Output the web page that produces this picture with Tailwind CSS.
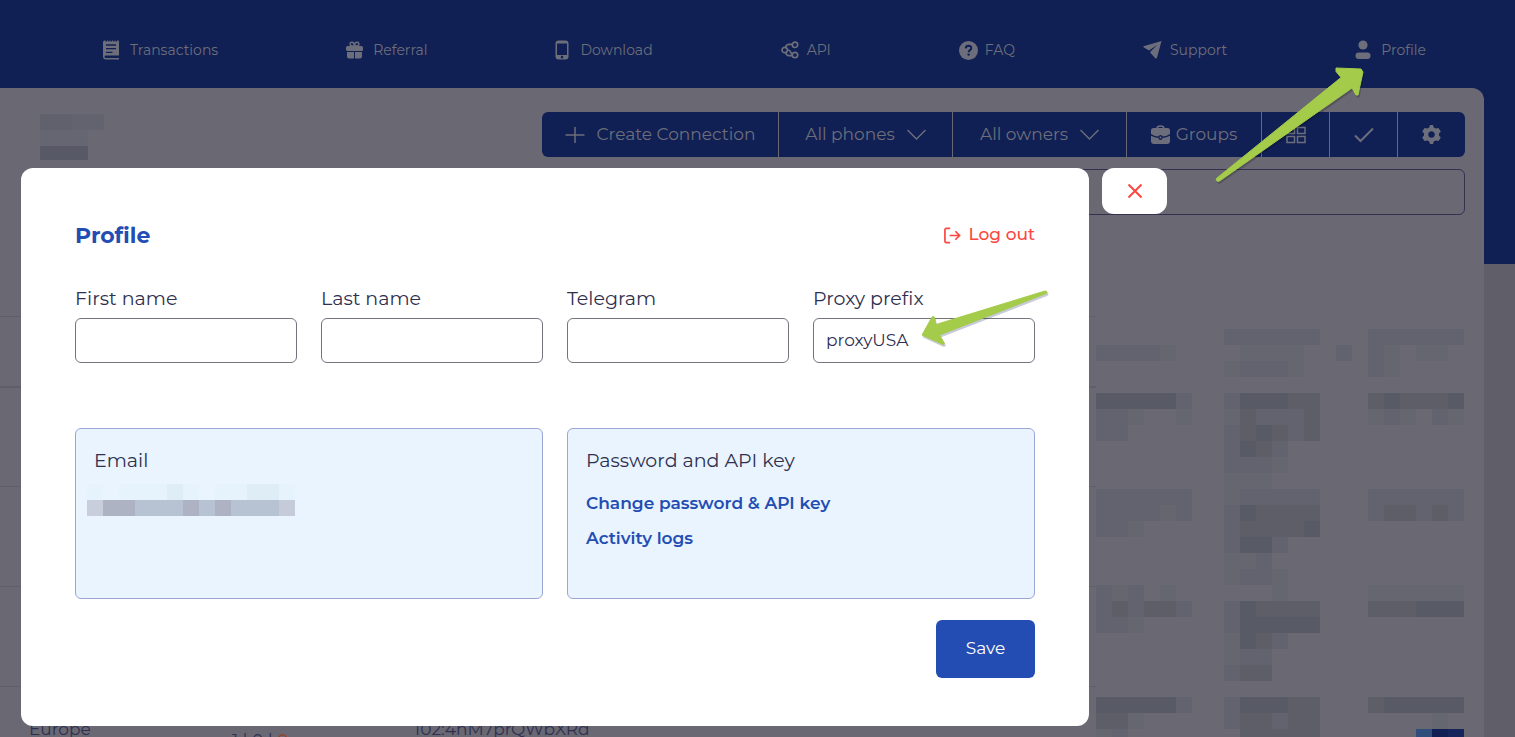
<!DOCTYPE html>
<html lang="en">
<head>
<meta charset="utf-8">
<meta name="viewport" content="width=device-width, initial-scale=1">
<title>Profile</title>
<script src="https://cdn.jsdelivr.net/npm/@tailwindcss/browser@4"></script>
</head>
<body class="bg-[#5f5e69] font-[Montserrat,Inter,sans-serif] text-[#2f3050]">
<div class="relative h-screen overflow-hidden">

  <!-- Dimmed page behind the dialog -->
  <header class="h-66 bg-[#102054] text-[#6d6e7b]">
    <nav class="flex h-22 items-center justify-between pt-3 pr-[89px] pl-[103px] text-sm">
      <a href="#" class="flex items-center gap-[11px]">
        <svg class="h-5 w-4" viewBox="0 0 16 20" fill="currentColor"><path d="M1.500.500h1V1.500h1.500V.500h1V1.500h1.500V.500h1V1.500H9V.500h1V1.500h1.500V.500h1V1.500H14V.500h1q1 0 1 1V15.500H3q-1.500 0-1.500 1.200T3 18h13v1.500H3Q0 19.500 0 16.500V2Q0 .500 1.500.500z"/><path d="M3 5h10M3 8.700h10M3 12.400h6.500" stroke="#102054" stroke-width="1.300"/></svg>
        Transactions</a>
      <a href="#" class="flex items-center gap-[10px]">
        <svg class="h-[18px] w-[17px]" viewBox="0 0 17 18" fill="currentColor"><rect y="5" width="17" height="5" rx="1.500"/><path d="M1 11h7v6.500H3q-2 0-2-2zM9 11h7v4.500q0 2-2 2H9z"/><path d="M8.500 5Q4 5.300 4 3q.2-1.800 2-1.700Q8.300 1.500 8.500 5q.2-3.500 2.500-3.700 1.800-.1 2 1.700 0 2.300-4.500 2z" fill="none" stroke="currentColor" stroke-width="1.500"/></svg>
        Referral</a>
      <a href="#" class="flex items-center gap-[11px]">
        <svg class="h-5 w-[14px]" viewBox="0 0 14 20" fill="currentColor"><path fill-rule="evenodd" d="M3.500.500h7Q13.500.500 13.500 3.500v13q0 3-3 3h-7q-3 0-3-3v-13Q.500.500 3.500.500zM2 3.500v11.500h10V3.500zM7 15.800a1.300 1.300 0 1 0 .01 0z"/></svg>
        Download</a>
      <a href="#" class="flex items-center gap-2">
        <svg class="h-[18px] w-[18px]" viewBox="0 0 18 18" fill="none" stroke="currentColor" stroke-width="1.700"><circle cx="3.700" cy="9" r="2.700"/><circle cx="14" cy="3.800" r="2.700"/><circle cx="14" cy="14" r="2.700"/><path d="M4.500 6.400Q5.300 3.300 8 3.300h3.300M4.500 11.600Q5.500 14.700 8 14.700h3.300M6.500 9Q9 9 9.500 11t2.300 2"/></svg>
        API</a>
      <a href="#" class="flex items-center gap-[7px]">
        <svg class="h-[19px] w-[19px]" viewBox="0 0 19 19"><circle cx="9.500" cy="9.500" r="9.500" fill="currentColor"/><path d="M6.700 7.300q.2-2.500 2.900-2.500 2.700.1 2.700 2.300 0 1.200-1.500 2.200-1.100.8-1.100 2" fill="none" stroke="#102054" stroke-width="2"/><circle cx="9.600" cy="13.600" r="1.200" fill="#102054"/></svg>
        FAQ</a>
      <a href="#" class="flex items-center gap-2">
        <svg class="h-5 w-[19px]" viewBox="0 0 19 20" fill="currentColor"><path d="M18.500 1 .500 6.300q-.5.500 0 1L6 10.500l8-5.500-6.800 7 .3 1 5 5.500q1 .3 1.500-.700z"/></svg>
        Support</a>
      <a href="#" class="flex items-center gap-[10px]">
        <svg class="h-5 w-4" viewBox="0 0 16 20" fill="currentColor"><circle cx="8" cy="5" r="4.600"/><rect x=".5" y="12.500" width="15" height="6.500" rx="3.250"/></svg>
        Profile</a>
    </nav>
  </header>

  <main class="-mt-44 mr-[31px] h-screen rounded-tr-xl bg-[#696873] pt-6 pr-[19px]">
    <div class="flex justify-end">
      <div class="flex h-[45px] divide-x divide-[#696873] overflow-hidden rounded-md bg-[#102054] text-[17px] text-[#6d6e7b]">
        <button class="flex w-[237px] items-center justify-center gap-3"><svg class="h-5 w-5" viewBox="0 0 20 20" stroke="currentColor" stroke-width="1.500"><path d="M.5 10h19M10 2v16"/></svg>Create Connection</button>
        <button class="flex w-[174px] items-center justify-center gap-3">All phones<svg class="h-3 w-[19px]" viewBox="0 0 19 12" fill="none" stroke="currentColor" stroke-width="1.400"><path d="m.5 1 9 9 9-9"/></svg></button>
        <button class="flex w-[174px] items-center justify-center gap-3">All owners<svg class="h-3 w-[19px]" viewBox="0 0 19 12" fill="none" stroke="currentColor" stroke-width="1.400"><path d="m.5 1 9 9 9-9"/></svg></button>
        <button class="flex w-[135px] items-center justify-center gap-[6px]"><svg class="h-[19px] w-[19px]" viewBox="0 0 19 19" fill="currentColor"><path d="M6 3.500Q6 1 9.500 1T13 3.500" fill="none" stroke="currentColor" stroke-width="1.500"/><path d="M2.500 3h14Q19 3 19 5.500V9q-4 2.500-7.500 2.500Q11.500 10 9.500 10t-2 1.500Q4 11.500 0 9V5.500Q0 3 2.500 3zM0 10.700q3.500 2 7.500 2.300 0 2 2 2t2-2q4-.3 7.500-2.300V16q0 3-3 3H3q-3 0-3-3z"/><circle cx="9.500" cy="12.500" r="1"/></svg>Groups</button>
        <button aria-label="Grid view" class="flex w-[68px] items-center justify-center"><svg class="h-[18px] w-5" viewBox="0 0 20 18" fill="none" stroke="currentColor" stroke-width="1.500"><path d="M1 1.500h7.500v6H1zM11.500 1.500H19v6h-7.500zM1 10.500h7.500v6H1zM11.500 10.500H19v6h-7.500z"/></svg></button>
        <button aria-label="Select" class="flex w-[68px] items-center justify-center"><svg class="h-4 w-5" viewBox="0 0 20 16" fill="none" stroke="currentColor" stroke-width="2"><path d="m1 8.500 5.500 5.500L19 1.500"/></svg></button>
        <button aria-label="Settings" class="flex w-[67px] items-center justify-center"><svg class="h-[19px] w-[19px]" viewBox="0 0 19 19" fill="currentColor"><path fill-rule="evenodd" d="M8 0h3l.8 2.600 1.700 1L16.500 3l2.300 3.500-1.800 2v2l1.800 2-2.300 3.500-3-.6-1.700 1L11 19H8l-.8-2.600-1.700-1-3 .6L.2 12.500l1.800-2v-2l-1.800-2L2.500 3l3 .6 1.700-1zM9.500 6.200a3.300 3.300 0 1 0 .01 0z"/></svg></button>
      </div>
    </div>
    <div class="mt-3 pl-10">
      <input type="text" aria-label="Search" class="block h-[46px] w-full rounded-md border border-[#343150] bg-transparent px-3">
    </div>
    <table class="mt-[101px] w-full table-fixed border-collapse text-[17px]">
      <colgroup><col class="w-[232px]"><col class="w-[182px]"><col></colgroup>
      <tr class="h-[70px] border-t border-[#5f5e69]"><td></td><td></td><td></td></tr>
      <tr class="h-[100px] border-t-2 border-[#5f5e69]"><td></td><td></td><td></td></tr>
      <tr class="h-[100px] border-t border-[#5f5e69]"><td></td><td></td><td></td></tr>
      <tr class="h-[100px] border-t border-[#5f5e69]"><td></td><td></td><td></td></tr>
      <tr class="h-[100px] border-t border-[#5f5e69] align-top"><td class="pt-[30px] pl-[29px]">Europe</td><td class="pt-[41px]">1 | 0 | <span class="text-[#9a4020]">0</span></td><td class="pt-[30px]">102:4hM7prQWbXRd</td></tr>
    </table>
  </main>

  <!-- Pixelated private data; filled by the script below -->
  <svg aria-hidden="true" class="absolute top-[114px] left-10" width="64" height="46"><path fill="#62636f" d="M0 0h64v16H0z"/><path fill="#60616c" d="M0 0h32v16H0z"/><path fill="#656671" d="M0 16h48v16H0z"/><path fill="#575966" d="M0 32h48v14H0z"/></svg>
  <svg id="mosaic" aria-hidden="true" class="absolute top-[313px] right-[49px]" width="370" height="424"><path fill="#696873" d="M0 0h370v424H0z"/></svg>

  <!-- Dialog -->
  <div class="absolute inset-x-0 top-42 flex items-start gap-[13px] pr-[348px] pl-[21px]">
    <section role="dialog" aria-labelledby="dialog-title" class="min-w-0 flex-1 rounded-xl bg-white px-[54px] pt-[51px] pb-12">
      <div class="flex h-8 items-center justify-between">
        <h1 id="dialog-title" class="text-[22px] font-bold text-[#234db3]">Profile</h1>
        <a href="#" class="flex items-center gap-2 text-[17px] font-medium text-[#fb4740]"><svg class="h-[17px] w-[17px]" viewBox="0 0 18 17" fill="none" stroke="currentColor" stroke-width="1.800"><path d="M6.500 1H2.500Q1 1 1 2.500v12Q1 16 2.500 16h4M6 8.500h10.500M12 4l4.500 4.500L12 13"/></svg>Log out</a>
      </div>
      <form>
        <div class="mt-[34px] grid grid-cols-4 gap-6 text-[19px] leading-7">
          <label class="flex flex-col gap-[5px]">First name<input type="text" class="h-[45px] w-full rounded-md border border-[#74747f] px-3 text-[17px]"></label>
          <label class="flex flex-col gap-[5px]">Last name<input type="text" class="h-[45px] w-full rounded-md border border-[#74747f] px-3 text-[17px]"></label>
          <label class="flex flex-col gap-[5px]">Telegram<input type="text" class="h-[45px] w-full rounded-md border border-[#74747f] px-3 text-[17px]"></label>
          <label class="flex flex-col gap-[5px]">Proxy prefix<input type="text" value="proxyUSA" class="h-[45px] w-full rounded-md border border-[#74747f] px-3 pb-[2px] text-[17px]"></label>
        </div>
        <div class="mt-[65px] grid grid-cols-2 gap-6">
          <div class="h-[171px] rounded-md border border-[#9ba6d6] bg-[#e9f4ff] px-[18px] pt-[18px]">
            <h2 class="text-[19px] leading-7">Email</h2>
            <svg id="email" role="img" aria-label="Hidden email" class="mt-[9px] -ml-[7px]" width="208" height="32"></svg>
          </div>
          <div class="h-[171px] rounded-md border border-[#9ba6d6] bg-[#e9f4ff] px-[18px] pt-[18px]">
            <h2 class="text-[19px] leading-7">Password and API key</h2>
            <div class="mt-4 flex flex-col items-start gap-[11px] text-[17px] leading-6 font-semibold text-[#234db3]">
              <a href="#">Change password &amp; API key</a>
              <a href="#">Activity logs</a>
            </div>
          </div>
        </div>
        <div class="mt-[21px] flex justify-end">
          <button type="button" class="h-[58px] w-[99px] rounded-md bg-[#234db3] text-[17px] text-white">Save</button>
        </div>
      </form>
    </section>
    <button aria-label="Close" class="flex h-[46px] w-[65px] items-center justify-center rounded-xl bg-white text-[#fb4740]"><svg class="h-4 w-4" viewBox="0 0 16 16" stroke="currentColor" stroke-width="2"><path d="m1.500 1.500 13 13m0-13-13 13"/></svg></button>
  </div>

  <!-- Callout arrows -->
  <svg aria-hidden="true" class="absolute top-[60px] right-[146px] drop-shadow-[1px_2px_0_#00000030]" width="160" height="130" fill="#a4cb4a" stroke="#a4cb4a" stroke-linejoin="round"><path d="m127 8 25 1 2 3-5 23h-2l-4-7L10.500 121q-2 1-3-.5-1-1.500.5-2.500L132 17.500l-5-6z"/></svg>
  <svg aria-hidden="true" class="absolute top-[279px] right-[455px] drop-shadow-[1px_2px_0_#20306040]" width="150" height="75" fill="#a4cb4a" stroke="#a4cb4a" stroke-linejoin="round"><path d="m12 56 10-18 2-.5 2 8L135 12q1.500 0 2 1t-1 1.500L29.500 56l5 8.500-1.500 1z"/></svg>
</div>

<script>
  const SIZE = 16;
  function drawCells(id, rows, colours) {
    const svg = document.getElementById(id);
    rows.forEach((row, y) => [...row].forEach((shade, x) => {
      if (!colours[shade]) return;
      const cell = document.createElementNS('http://www.w3.org/2000/svg', 'rect');
      cell.setAttribute('x', x * SIZE);
      cell.setAttribute('y', y * SIZE);
      cell.setAttribute('width', SIZE);
      cell.setAttribute('height', SIZE);
      cell.setAttribute('fill', colours[shade]);
      svg.append(cell);
    }));
  }
  drawCells('mosaic', [
    '',
    '........222222...222222',
    '22221....1111..2.21.11.',
    '........12221....21....',
    '',
    '444442..244433...343334',
    '221..1..132223...121.21',
    '22......234323.........',
    '........2432...........',
    '........2221...........',
    '........111............',
    '222222..122222...222222',
    '222212..243333...233232',
    '221.....233334.........',
    '........2442...........',
    '........112............',
    '........1221...........',
    '212.1......1.....111111',
    '232332..243333...333444',
    '221.....244444.........',
    '........1432...........',
    '........122............',
    '........233............',
    '',
    '444442..244433...344444',
    '331.....233233.......1.',
    '12.......33333......567'
  ], { 1: '#666670', 2: '#62636e', 3: '#5e5e69', 4: '#585a66', 5: '#304f7c', 6: '#102054', 7: '#16265c' });
  drawCells('email', ['1.11121.11221', 'abbcccbcbcccd'],
    { 1: '#e7f3fc', 2: '#dfedf6', a: '#c8cedb', b: '#adb3c3', c: '#b7c3d3', d: '#c5cbd9' });
</script>
</body>
</html>
